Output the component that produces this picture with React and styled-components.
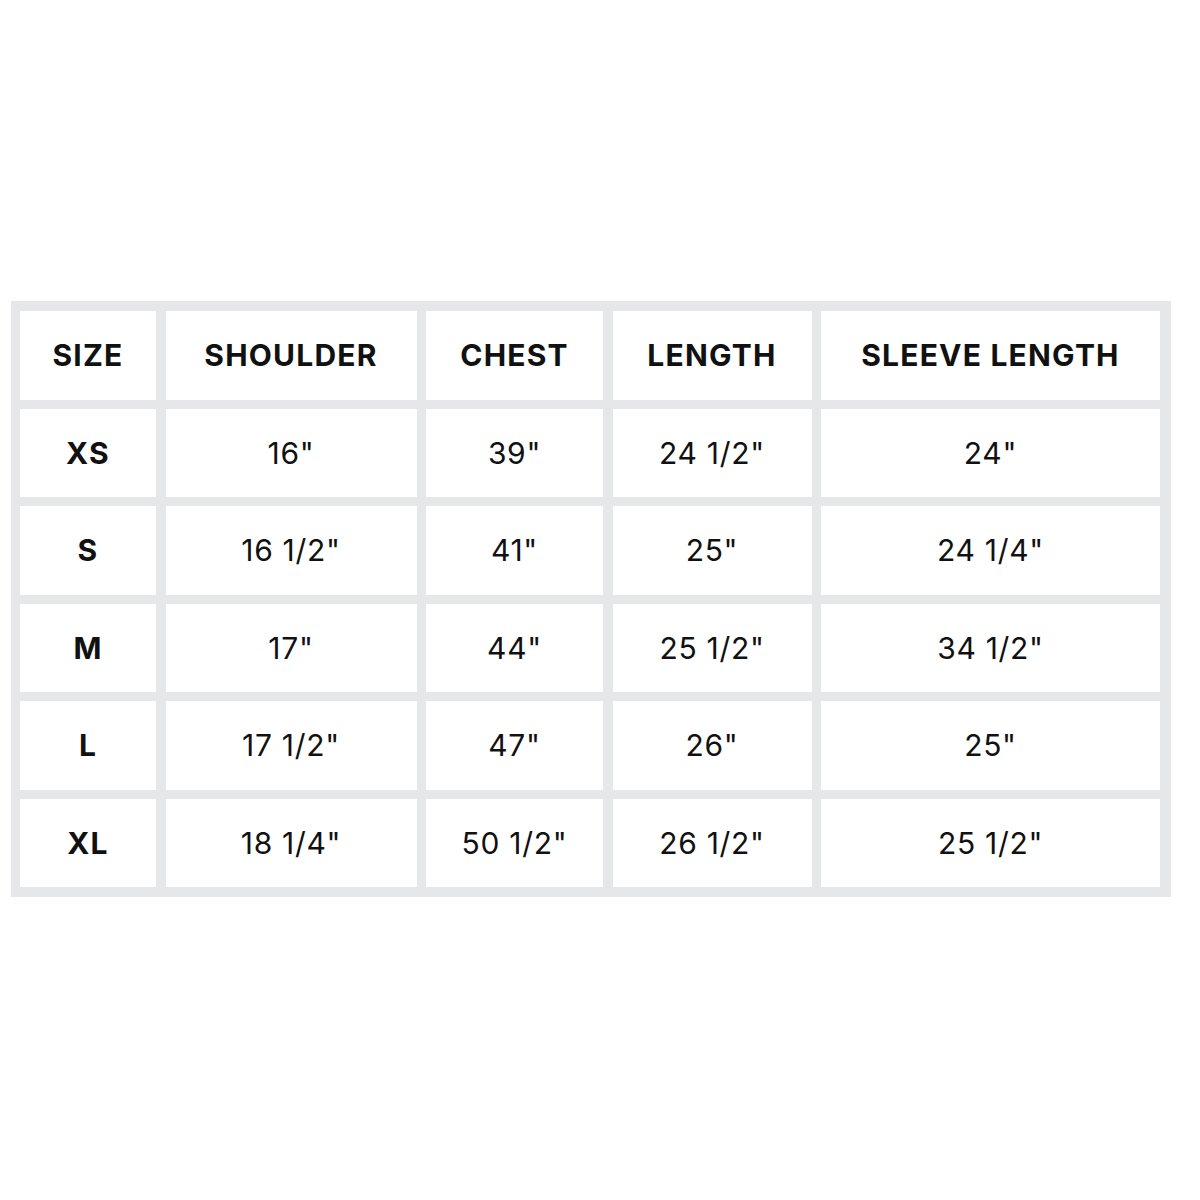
import styled, { createGlobalStyle } from "styled-components";

const GlobalStyle = createGlobalStyle`
  body {
    margin: 0;
    background: #ffffff;
    font-family: Inter, "Liberation Sans", sans-serif;
  }
`;

const Page = styled.div`
  width: 1200px;
  height: 1200px;
  padding: 301px 0 0 11px;
  box-sizing: border-box;
`;

const Table = styled.div`
  display: grid;
  grid-template-columns: 136px 251px 177px 199px 339px;
  grid-template-rows: repeat(6, 88.5px);
  column-gap: 9.5px;
  row-gap: 9px;
  width: 1160px;
  padding: 10px 10px 10px 9px;
  box-sizing: border-box;
  background: #e6e7e9;
`;

const Cell = styled.div`
  display: flex;
  align-items: center;
  justify-content: center;
  background: #ffffff;
  color: #111111;
  font-size: 30px;
  font-weight: ${(p) => (p.$bold ? 700 : 400)};
  letter-spacing: ${(p) => (p.$bold ? "1.2px" : "0.7px")};
`;

const headers = ["SIZE", "SHOULDER", "CHEST", "LENGTH", "SLEEVE LENGTH"];

const rows = [
  ["XS", '16"', '39"', '24 1/2"', '24"'],
  ["S", '16 1/2"', '41"', '25"', '24 1/4"'],
  ["M", '17"', '44"', '25 1/2"', '34 1/2"'],
  ["L", '17 1/2"', '47"', '26"', '25"'],
  ["XL", '18 1/4"', '50 1/2"', '26 1/2"', '25 1/2"'],
];

export default function App() {
  return (
    <>
      <GlobalStyle />
      <Page>
        <Table>
          {headers.map((h) => (
            <Cell key={h} $bold>
              {h}
            </Cell>
          ))}
          {rows.map((row) =>
            row.map((value, i) => (
              <Cell key={row[0] + i} $bold={i === 0}>
                {value}
              </Cell>
            ))
          )}
        </Table>
      </Page>
    </>
  );
}
